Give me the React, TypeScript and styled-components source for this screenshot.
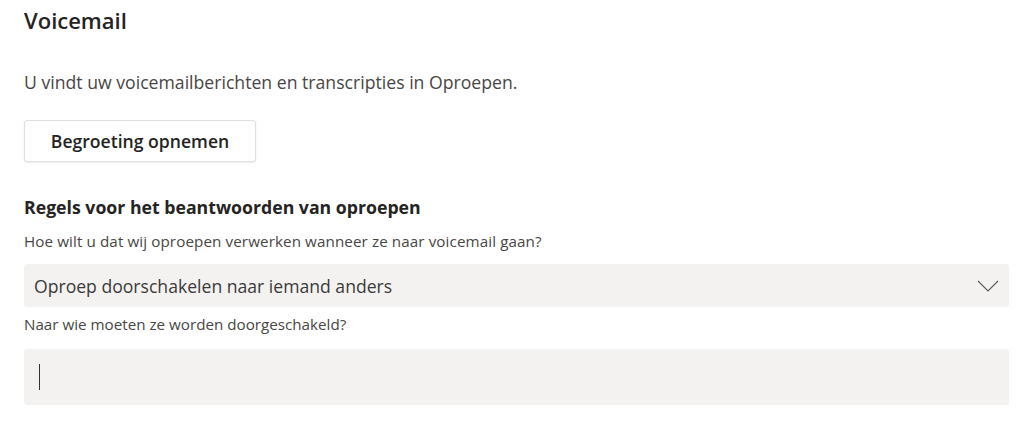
import styled, { createGlobalStyle } from 'styled-components';

const GlobalStyle = createGlobalStyle`
  html, body {
    margin: 0;
    padding: 0;
    background: #ffffff;
  }
  body {
    font-family: "Segoe UI", "Open Sans", "Noto Sans", sans-serif;
    color: #252423;
  }
`;

const Page = styled.div`
  width: 985px;
  padding: 6px 15px 0 24px;
  display: flex;
  flex-direction: column;
  align-items: flex-start;
`;

const Title = styled.h2`
  margin: 0;
  font-size: 22px;
  line-height: 28px;
  font-weight: 600;
  color: #252423;
`;

const Description = styled.p`
  margin: 38px 0 0;
  font-size: 17.65px;
  line-height: 20px;
  color: #484644;
`;

const OutlineButton = styled.button`
  margin-top: 28px;
  height: 42px;
  width: 232px;
  background: #ffffff;
  border: 1px solid #e1dfdd;
  border-radius: 3px;
  box-shadow: 0 1px 2px rgba(0, 0, 0, 0.08);
  font-family: inherit;
  font-size: 17.6px;
  font-weight: 600;
  color: #252423;
  cursor: pointer;
`;

const SectionTitle = styled.h3`
  margin: 35px 0 0;
  font-size: 17.7px;
  line-height: 20px;
  font-weight: 700;
  color: #252423;
`;

const Hint = styled.p<{ gap: number; size: number; spacing?: number }>`
  margin: ${({ gap }) => gap}px 0 0;
  font-size: ${({ size }) => size}px;
  letter-spacing: ${({ spacing = 0 }) => spacing}px;
  line-height: 20px;
  color: #484644;
`;

const Dropdown = styled.div`
  margin-top: 13px;
  width: 100%;
  height: 43px;
  box-sizing: border-box;
  padding: 0 10px 0 10px;
  background: #f3f2f1;
  border-radius: 3px;
  display: flex;
  align-items: center;
  justify-content: space-between;
  font-size: 17.6px;
  color: #3b3a39;
`;

const Chevron = styled.svg`
  width: 22px;
  height: 12px;
`;

const TextField = styled.div`
  margin-top: 15px;
  width: 100%;
  height: 56px;
  box-sizing: border-box;
  padding-left: 15px;
  background: #f3f2f1;
  border-radius: 3px;
  display: flex;
  align-items: center;
`;

const Caret = styled.span`
  display: block;
  width: 1px;
  height: 26px;
  background: #323130;
`;

export default function App() {
  return (
    <>
      <GlobalStyle />
      <Page>
        <Title>Voicemail</Title>
        <Description>U vindt uw voicemailberichten en transcripties in Oproepen.</Description>
        <OutlineButton>Begroeting opnemen</OutlineButton>
        <SectionTitle>Regels voor het beantwoorden van oproepen</SectionTitle>
        <Hint gap={14} size={15.2} spacing={0.1}>
          Hoe wilt u dat wij oproepen verwerken wanneer ze naar voicemail gaan?
        </Hint>
        <Dropdown>
          <span>Oproep doorschakelen naar iemand anders</span>
          <Chevron viewBox="0 0 22 12">
            <polyline points="1,1 11,11 21,1" fill="none" stroke="#605e5c" strokeWidth="1.2" />
          </Chevron>
        </Dropdown>
        <Hint gap={7} size={15.2}>
          Naar wie moeten ze worden doorgeschakeld?
        </Hint>
        <TextField>
          <Caret />
        </TextField>
      </Page>
    </>
  );
}
